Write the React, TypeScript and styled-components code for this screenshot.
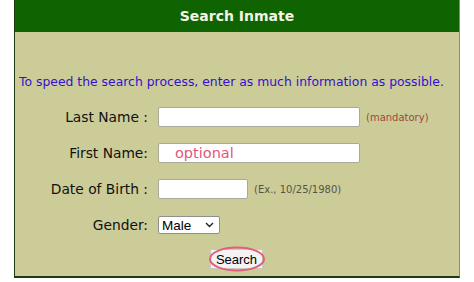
import React from "react";
import styled, { createGlobalStyle } from "styled-components";

const Global = createGlobalStyle`
  html, body { margin: 0; padding: 0; background: #ffffff; }
  body { font-family: "DejaVu Sans", Verdana, sans-serif; }
`;

const Page = styled.div`
  width: 474px;
  height: 282px;
  overflow: hidden;
  padding-left: 14px;
  box-sizing: border-box;
`;

const Panel = styled.div`
  width: 446px;
  height: 278px;
  box-sizing: border-box;
  background: #cccc99;
  border-left: 1px solid #1d3a12;
  border-right: 1px solid #8a8a70;
  border-bottom: 2px solid #1d3a12;
  display: flex;
  flex-direction: column;
`;

const Header = styled.div`
  height: 32px;
  background: #0f6300;
  color: #f4f4e8;
  font-weight: bold;
  font-size: 14px;
  display: flex;
  align-items: center;
  justify-content: center;
`;

const Intro = styled.div`
  margin-top: 42px;
  padding-left: 4px;
  font-size: 12.4px;
  color: #3311cc;
  line-height: 16px;
  white-space: nowrap;
`;

const Form = styled.div`
  margin-top: 17px;
  display: grid;
  grid-template-columns: 133px 1fr;
  column-gap: 10px;
  row-gap: 16px;
  align-items: center;
`;

const Label = styled.div`
  text-align: right;
  font-size: 13.8px;
  color: #111;
  line-height: 20px;
  white-space: nowrap;
`;

const Field = styled.div`
  display: flex;
  align-items: center;
  gap: 6px;
  height: 20px;
`;

const TextBox = styled.div<{ $w: number }>`
  width: ${(p) => p.$w}px;
  height: 20px;
  box-sizing: border-box;
  background: #ffffff;
  border: 1px solid #a9a99a;
  border-radius: 2px;
  display: flex;
  align-items: center;
`;

const Optional = styled.span`
  padding-left: 16px;
  font-size: 14.5px;
  color: #e3557a;
`;

const Hint = styled.span<{ $c: string }>`
  font-size: 10px;
  color: ${(p) => p.$c};
  white-space: nowrap;
`;

const Select = styled.div`
  width: 62px;
  height: 18px;
  box-sizing: border-box;
  background: #fff;
  border: 1px solid #8f8f8f;
  border-radius: 2px;
  display: flex;
  align-items: center;
  justify-content: space-between;
  padding: 0 5px 0 3px;
  font-family: "Liberation Sans", Arial, sans-serif;
  font-size: 13.5px;
  color: #000;
`;

const ButtonRow = styled.div`
  margin-top: 14px;
  display: flex;
  justify-content: center;
`;

const ButtonWrap = styled.div`
  position: relative;
  margin-left: -1px;
`;

const Button = styled.div`
  width: 53px;
  height: 20px;
  box-sizing: border-box;
  background: #f3f3f3;
  border: 1px solid #c8c8c8;
  display: flex;
  align-items: center;
  justify-content: center;
  font-family: "Liberation Sans", Arial, sans-serif;
  font-size: 13px;
  color: #000;
`;

const Circle = styled.svg`
  position: absolute;
  left: 0px;
  top: -3px;
  width: 56px;
  height: 26px;
  overflow: visible;
`;

export default function App() {
  return (
    <>
      <Global />
      <Page>
        <Panel>
          <Header>Search Inmate</Header>
          <Intro>To speed the search process, enter as much information as possible.</Intro>
          <Form>
            <Label>Last Name :</Label>
            <Field>
              <TextBox $w={202} />
              <Hint $c="#a0463a">(mandatory)</Hint>
            </Field>
            <Label>First Name:</Label>
            <Field>
              <TextBox $w={202}>
                <Optional>optional</Optional>
              </TextBox>
            </Field>
            <Label>Date of Birth :</Label>
            <Field>
              <TextBox $w={90} />
              <Hint $c="#555544">(Ex., 10/25/1980)</Hint>
            </Field>
            <Label>Gender:</Label>
            <Field>
              <Select>
                <span>Male</span>
                <svg width="9" height="6" viewBox="0 0 9 6">
                  <path d="M1 1 L4.5 4.5 L8 1" fill="none" stroke="#222" strokeWidth="1.4" />
                </svg>
              </Select>
            </Field>
          </Form>
          <ButtonRow>
            <ButtonWrap>
              <Button>Search</Button>
              <Circle viewBox="0 0 56 26">
                <ellipse cx="27" cy="13" rx="27" ry="11.5" fill="none" stroke="#e0607a" strokeWidth="2" />
              </Circle>
            </ButtonWrap>
          </ButtonRow>
        </Panel>
      </Page>
    </>
  );
}
